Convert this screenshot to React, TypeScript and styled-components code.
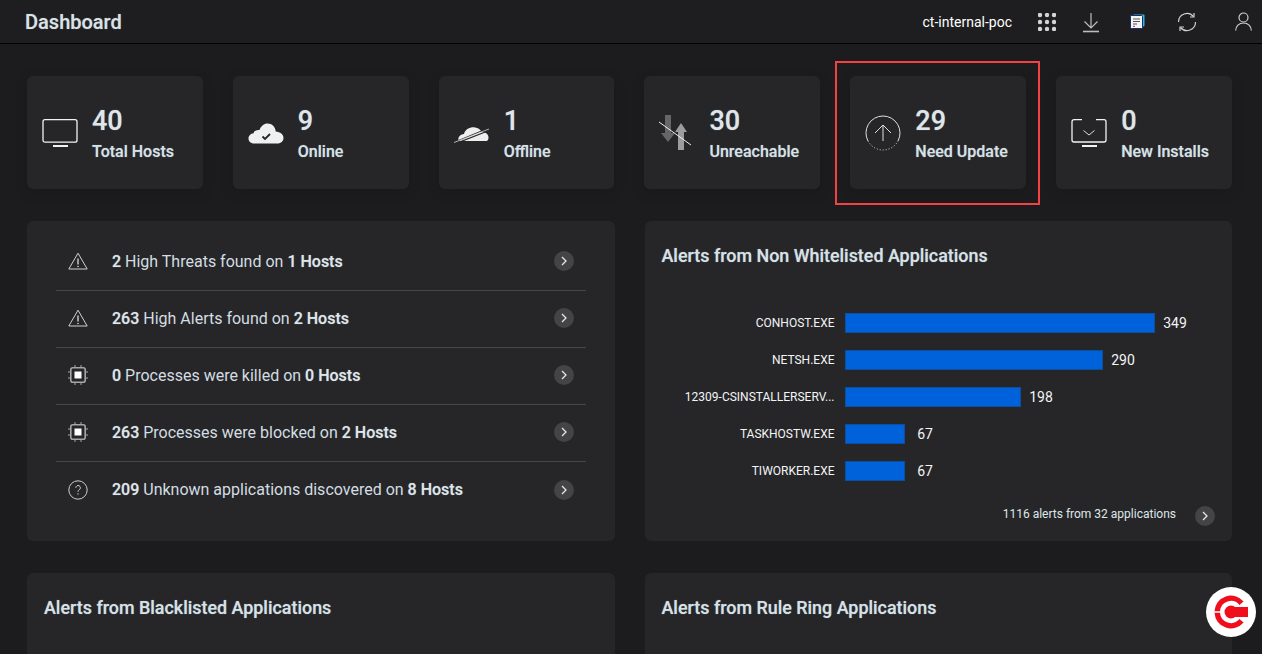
import React from "react";
import styled, { createGlobalStyle } from "styled-components";

const GlobalStyle = createGlobalStyle`
  html, body {
    margin: 0;
    height: 100%;
    overflow: hidden;
    background: #1c1c1e;
  }
  body {
    font-family: Roboto, "Liberation Sans", sans-serif;
    color: #dfe6ea;
  }
  * {
    box-sizing: border-box;
  }
`;

const heavyText = `text-shadow: 0 0 1px rgba(214, 226, 232, 0.55);`;

const Page = styled.div`
  height: 654px;
  overflow: hidden;
`;

const Header = styled.header`
  height: 44px;
  display: flex;
  align-items: center;
  background: #1e1e20;
  border-bottom: 1px solid #000;
  padding: 0 9px 0 25px;
`;

const Title = styled.h1`
  flex: 1;
  margin: 0;
  font-size: 20px;
  font-weight: 500;
  color: #d9e2e6;
  ${heavyText}
`;

const Tenant = styled.span`
  font-size: 14px;
  font-weight: 400;
  color: #fff;
  margin-right: 25px;
`;

const ToolIcon = styled.span<{ $gap?: number }>`
  width: 20px;
  height: 24px;
  margin-left: ${(p) => p.$gap ?? 0}px;
  display: flex;
  align-items: center;
  justify-content: center;
`;

const Content = styled.main`
  padding: 32px 30px 0 27px;
`;

const StatGrid = styled.section`
  display: grid;
  grid-template-columns: repeat(6, 1fr);
  column-gap: 30px;
`;

const StatCard = styled.div<{ $flagged?: boolean }>`
  position: relative;
  height: 113px;
  display: flex;
  align-items: center;
  gap: 13px;
  padding: 0 0 0 14px;
  background: #262628;
  border-radius: 6px;
  box-shadow: 0 4px 14px rgba(0, 0, 0, 0.12);
  ${(p) =>
    p.$flagged &&
    `
    &::after {
      content: "";
      position: absolute;
      inset: -15px -14px -16px -15px;
      border: 2px solid #f44242;
      pointer-events: none;
    }
  `}
`;

const StatIcon = styled.div`
  width: 38px;
  flex: none;
  display: flex;
  justify-content: center;
  margin-top: 1px;
`;

const StatText = styled.div`
  padding-top: 2px;
`;

const StatValue = styled.div`
  font-size: 27px;
  font-weight: 500;
  line-height: 32px;
  color: #dfe6ea;
  ${heavyText}
`;

const StatLabel = styled.div`
  font-size: 16px;
  font-weight: 500;
  line-height: 20px;
  margin-top: 5px;
  white-space: nowrap;
  color: #d6e2e8;
  ${heavyText}
`;

const PanelGrid = styled.section`
  display: grid;
  grid-template-columns: 1fr 1fr;
  column-gap: 30px;
  row-gap: 32px;
  margin-top: 32px;
`;

const Panel = styled.div<{ $short?: boolean }>`
  position: relative;
  height: ${(p) => (p.$short ? "120px" : "320px")};
  background: #262628;
  border-radius: 6px;
`;

const FindingList = styled.ul`
  list-style: none;
  margin: 0;
  padding: 13px 29px 0;
`;

const Finding = styled.li`
  height: 57px;
  display: flex;
  align-items: center;
  padding: 0 12px 2px 11px;
  border-bottom: 1px solid #47474a;
  font-size: 16px;
  color: #d3dde2;
  &:last-child {
    border-bottom: 0;
  }
  b {
    font-weight: 500;
    color: #dfe6ea;
    ${heavyText}
  }
`;

const FindingIcon = styled.span`
  width: 22px;
  margin-right: 23px;
  display: flex;
  justify-content: center;
`;

const FindingText = styled.span`
  flex: 1;
`;

const GoButton = styled.span`
  width: 20px;
  height: 20px;
  flex: none;
  border-radius: 50%;
  background: #444447;
  display: flex;
  align-items: center;
  justify-content: center;
`;

const PanelTitle = styled.h2`
  margin: 0;
  padding: 24px 16px 0 17px;
  font-size: 17.9px;
  line-height: 22px;
  font-weight: 500;
  color: #d6e2e8;
  ${heavyText}
`;

const Chart = styled.div`
  margin-top: 46px;
  display: flex;
  flex-direction: column;
  gap: 17px;
`;

const BarRow = styled.div`
  height: 20px;
  display: flex;
  align-items: center;
`;

const BarLabel = styled.span`
  width: 190px;
  flex: none;
  text-align: right;
  margin-right: 10px;
  font-size: 12px;
  font-weight: 400;
  white-space: nowrap;
  color: #f2f5f7;
`;

const Bar = styled.span`
  height: 20px;
  background: #0062db;
  border: 1px solid #0d4f9f;
`;

const BarValue = styled.span`
  width: 25px;
  margin-left: 8px;
  text-align: center;
  font-size: 14px;
  color: #f2f4f6;
`;

const ChartFooter = styled.div`
  margin-top: 25px;
  padding-right: 17px;
  display: flex;
  align-items: center;
  justify-content: flex-end;
  gap: 19px;
  font-size: 12px;
  color: #dfe6ea;
`;

const FooterNote = styled.span`
  padding-bottom: 4px;
`;

const Badge = styled.a`
  position: fixed;
  left: 1206px;
  top: 587px;
  width: 50px;
  height: 50px;
  border-radius: 50%;
  background: #fff;
  display: flex;
  align-items: center;
  justify-content: center;
`;

const GridDots = () => (
  <svg width="18" height="18" viewBox="0 0 18 18" fill="#d4d4d4">
    {[2, 9, 16].flatMap((y) =>
      [2, 9, 16].map((x) => <circle key={`${x}-${y}`} cx={x} cy={y} r="2.200" />)
    )}
  </svg>
);

const DownloadIcon = () => (
  <svg width="18" height="22" viewBox="0 0 18 22" fill="none" stroke="#bdbdbd" strokeWidth="1.2">
    <path d="M9 2v15M2.500 10.500 9 17l6.500-6.500" />
    <path d="M1 20.500h16" strokeWidth="1.600" />
  </svg>
);

const NotesIcon = () => (
  <svg width="15" height="15" viewBox="0 0 15 15">
    <rect x="3" y="0.500" width="11.500" height="12" rx="1" fill="#2bb7e0" />
    <rect x="0.500" y="1.500" width="12" height="13" rx="1" fill="#f4f4f4" stroke="#1a2a6c" />
    <path d="M3 5h7M3 7.500h7M3 10h4" stroke="#555" strokeWidth="1.200" />
    <path d="M3 12.300h2" stroke="#d21b4b" strokeWidth="1" />
  </svg>
);

const SyncIcon = () => (
  <svg width="20" height="20" viewBox="0 0 20 20" fill="none" stroke="#d0d0d0" strokeWidth="1.200">
    <path d="M1.500 10A8.500 8.500 0 0 1 16.500 4.500" />
    <path d="M17 1v4h-4" />
    <path d="M18.500 10A8.500 8.500 0 0 1 3.500 15.500" />
    <path d="M3 19v-4h4" />
  </svg>
);

const UserIcon = () => (
  <svg width="17" height="19" viewBox="0 0 17 19" fill="none" stroke="#d0d0d0" strokeWidth="1.200">
    <circle cx="8.500" cy="5.500" r="4.500" />
    <path d="M0.700 18.500c0-4.500 3.300-7.500 7.800-7.500s7.800 3 7.800 7.500" />
  </svg>
);

const MonitorIcon = ({ install }: { install?: boolean }) => (
  <svg width="36" height="30" viewBox="0 0 36 30" fill="none" stroke="#f2f2f2" strokeWidth="1.300">
    {install ? (
      <>
        <path d="M11 1.700H3a2 2 0 0 0-2 2V22a2 2 0 0 0 2 2h30a2 2 0 0 0 2-2V3.700a2 2 0 0 0-2-2h-8" />
        <path d="M12.500 12.500 18 17l5.500-4.500" strokeWidth="0.900" />
      </>
    ) : (
      <rect x="1" y="1.700" width="34" height="22.500" rx="2" />
    )}
    <path d="M11 28h15" strokeWidth="2" />
  </svg>
);

const OnlineIcon = () => (
  <svg width="36" height="21" viewBox="0 0 36 21">
    <path
      d="M6 20.500C2.500 20.500 .5 18 .5 15.500c0-3 2.300-5 5-5.300C6.500 7.500 9 6.500 11.500 7 13 3 16 .5 19.500.5c4.500 0 8 3.500 8.200 8 4.500.3 7.800 3 7.800 6.500 0 3-2.500 5.500-6 5.500Z"
      fill="#eef0f2"
    />
    <path d="M14.500 13.500l2.500 2.500 5-5" fill="none" stroke="#26262a" strokeWidth="1.800" />
  </svg>
);

const OfflineIcon = () => (
  <svg width="36" height="20" viewBox="0 0 36 20">
    <path
      d="M5 18c-2-3 1-7 5-7 1-5 8-8 13-6 2 .6 3.500 2 4.500 4 4 0 7 2 7 5.500 0 2-1 3.500-2 3.500Z"
      fill="#eeeeee"
    />
    <path d="M1 19 35 5M3 20 35 7.500" stroke="#262628" strokeWidth="1.300" />
    <path d="M0 19.500 35 6" stroke="#eeeeee" strokeWidth="0.700" />
  </svg>
);

const UnreachableIcon = () => (
  <svg width="38" height="36" viewBox="0 0 38 36">
    <path d="M7 0h6v18h4l-7 9-7-9h4Z" fill="#666668" />
    <path d="M20 35V17h-3l6-9 6 9h-3v18Z" fill="#9c9c9c" />
    <path d="M1 7 33 30" stroke="#f0f0f0" strokeWidth="1" />
  </svg>
);

const UpdateIcon = () => (
  <svg width="36" height="36" viewBox="0 0 36 36" fill="none" stroke="#e0e0e0" strokeWidth="1">
    <path d="M3 26A17 17 0 1 1 33 26" />
    <path d="M3 26A17 17 0 0 0 33 26" strokeDasharray="1 2" />
    <path d="M18 26V10M10 18l8-8 8 8" />
  </svg>
);

const WarningIcon = () => (
  <svg width="20" height="18" viewBox="0 0 20 18" fill="none" stroke="#d0d0d0" strokeWidth="1">
    <path d="M10 1.200 19.200 17H.8Z" strokeLinejoin="round" />
    <path d="M10 6.500v6" strokeWidth="1.400" />
    <circle cx="10" cy="14.500" r=".8" fill="#d0d0d0" stroke="none" />
  </svg>
);

const ChipIcon = () => (
  <svg width="20" height="20" viewBox="0 0 20 20" fill="none" stroke="#a6a6a6" strokeWidth="1.600">
    <rect x="2.800" y="2.800" width="14.400" height="14.400" rx="2" />
    <rect x="6.500" y="6.500" width="7" height="7" fill="#fff" stroke="none" />
    <path d="M7 0v2.500M13 0v2.500M7 17.500V20M13 17.500V20M0 7h2.500M0 13h2.500M17.500 7H20M17.500 13H20" strokeWidth="1" />
  </svg>
);

const QuestionIcon = () => (
  <svg width="20" height="20" viewBox="0 0 20 20" fill="none" stroke="#d0d0d0" strokeWidth="1">
    <circle cx="10" cy="10" r="9.200" />
    <path d="M7.800 7.800a2.300 2.300 0 1 1 3.600 1.900c-1 .6-1.400 1-1.400 2.100" />
    <circle cx="10" cy="14" r=".7" fill="#d0d0d0" stroke="none" />
  </svg>
);

const ChevronRight = () => (
  <svg width="8" height="10" viewBox="0 0 8 10" fill="none" stroke="#e6e6e6" strokeWidth="1.300">
    <path d="M2 1l4 4-4 4" />
  </svg>
);

const BrandMark = () => (
  <svg width="34" height="34" viewBox="0 0 34 34" fill="#f00d1c">
    <path d="M.5 16.200A16.500 16.500 0 0 1 29.600 6.400L25.400 9.900A11 11 0 0 0 6 16.200Z" />
    <path d="M.5 17.800A16.500 16.500 0 0 0 29.600 27.600L25.400 24.100A11 11 0 0 1 6 17.800Z" />
    <circle cx="17" cy="17" r="6.500" />
    <path d="M20 12h14v10H20Z" />
  </svg>
);

const stats = [
  { value: 40, label: "Total Hosts", icon: <MonitorIcon /> },
  { value: 9, label: "Online", icon: <OnlineIcon /> },
  { value: 1, label: "Offline", icon: <OfflineIcon /> },
  { value: 30, label: "Unreachable", icon: <UnreachableIcon /> },
  { value: 29, label: "Need Update", icon: <UpdateIcon />, flagged: true },
  { value: 0, label: "New Installs", icon: <MonitorIcon install /> },
];

const findings = [
  { count: 2, text: "High Threats found on", hosts: 1, icon: <WarningIcon /> },
  { count: 263, text: "High Alerts found on", hosts: 2, icon: <WarningIcon /> },
  { count: 0, text: "Processes were killed on", hosts: 0, icon: <ChipIcon /> },
  { count: 263, text: "Processes were blocked on", hosts: 2, icon: <ChipIcon /> },
  { count: 209, text: "Unknown applications discovered on", hosts: 8, icon: <QuestionIcon /> },
];

const alerts = [
  { name: "CONHOST.EXE", count: 349 },
  { name: "NETSH.EXE", count: 290 },
  { name: "12309-CSINSTALLERSERV...", count: 198 },
  { name: "TASKHOSTW.EXE", count: 67 },
  { name: "TIWORKER.EXE", count: 67 },
];

const App = (): JSX.Element => {
  return (
    <Page>
      <GlobalStyle />
      <Header>
        <Title>Dashboard</Title>
        <Tenant>ct-internal-poc</Tenant>
        <ToolIcon><GridDots /></ToolIcon>
        <ToolIcon $gap={24}><DownloadIcon /></ToolIcon>
        <ToolIcon $gap={26}><NotesIcon /></ToolIcon>
        <ToolIcon $gap={30}><SyncIcon /></ToolIcon>
        <ToolIcon $gap={36}><UserIcon /></ToolIcon>
      </Header>
      <Content>
        <StatGrid>
          {stats.map((s) => (
            <StatCard key={s.label} $flagged={s.flagged}>
              <StatIcon>{s.icon}</StatIcon>
              <StatText>
                <StatValue>{s.value}</StatValue>
                <StatLabel>{s.label}</StatLabel>
              </StatText>
            </StatCard>
          ))}
        </StatGrid>
        <PanelGrid>
          <Panel>
            <FindingList>
              {findings.map((f) => (
                <Finding key={f.text}>
                  <FindingIcon>{f.icon}</FindingIcon>
                  <FindingText>
                    <b>{f.count}</b> {f.text} <b>{f.hosts} Hosts</b>
                  </FindingText>
                  <GoButton><ChevronRight /></GoButton>
                </Finding>
              ))}
            </FindingList>
          </Panel>
          <Panel>
            <PanelTitle>Alerts from Non Whitelisted Applications</PanelTitle>
            <Chart>
              {alerts.map((a) => (
                <BarRow key={a.name}>
                  <BarLabel>{a.name}</BarLabel>
                  <Bar style={{ width: Math.round((a.count / 349) * 310) }} />
                  <BarValue>{a.count}</BarValue>
                </BarRow>
              ))}
            </Chart>
            <ChartFooter>
              <FooterNote>1116 alerts from 32 applications</FooterNote>
              <GoButton><ChevronRight /></GoButton>
            </ChartFooter>
          </Panel>
          <Panel $short>
            <PanelTitle>Alerts from Blacklisted Applications</PanelTitle>
          </Panel>
          <Panel $short>
            <PanelTitle>Alerts from Rule Ring Applications</PanelTitle>
          </Panel>
        </PanelGrid>
      </Content>
      <Badge><BrandMark /></Badge>
    </Page>
  );
};

export default App;
